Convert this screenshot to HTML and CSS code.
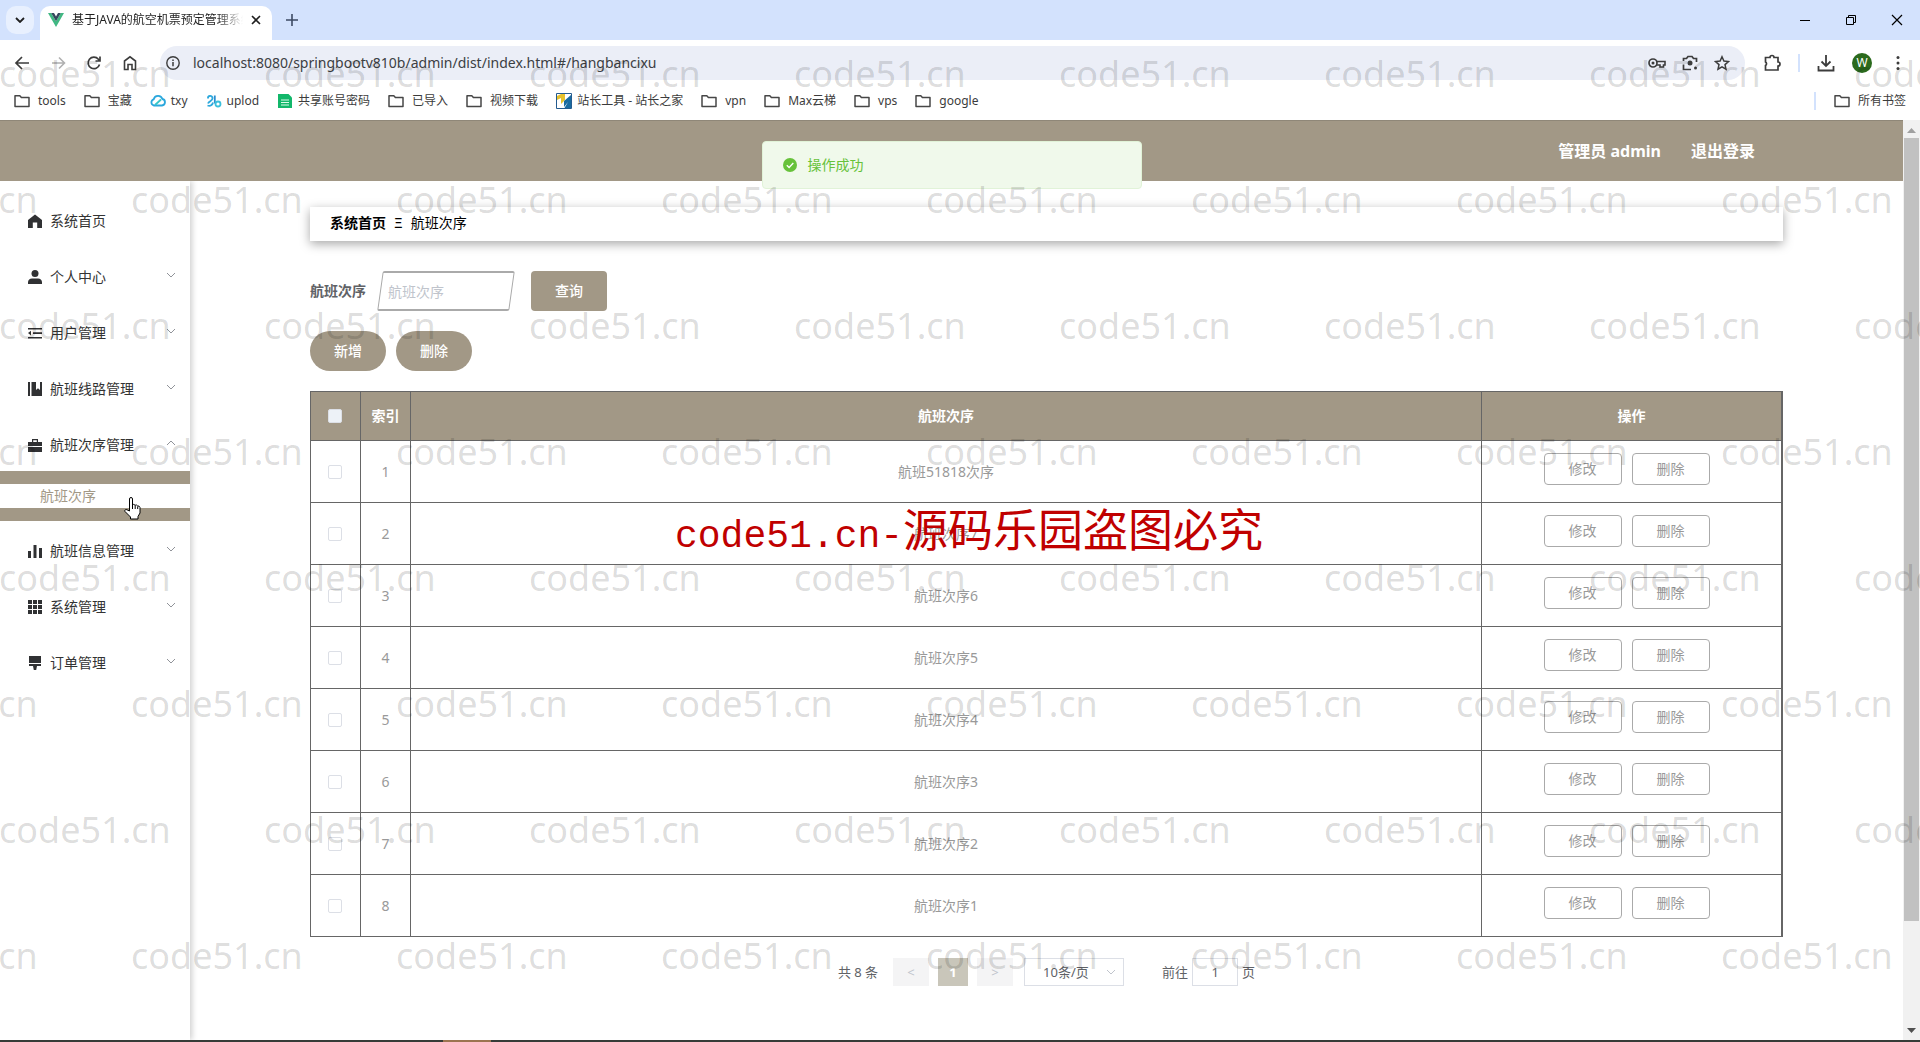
FILE: index.html
```html
<!DOCTYPE html>
<html lang="zh-CN">
<head>
<meta charset="utf-8">
<title>基于JAVA的航空机票预定管理系统</title>
<link rel="stylesheet" href="styles.css">
</head>
<body>
<svg class="defs" aria-hidden="true">
  <symbol id="folder" viewBox="0 0 16 16"><path d="M1 2.8h4.8l1.6 1.8H15v8.9H1z" fill="none" stroke="#474747" stroke-width="1.5" stroke-linejoin="round"/></symbol>
  <symbol id="down" viewBox="0 0 10 6"><path d="M1 1l4 4 4-4" fill="none" stroke="currentColor"/></symbol>
  <symbol id="up" viewBox="0 0 10 6"><path d="M1 5l4-4 4 4" fill="none" stroke="currentColor"/></symbol>
</svg>

<header class="browser">
  <div class="tabs">
    <button class="tab-search" aria-label="搜索标签页"><svg width="10" height="6" viewBox="0 0 10 6"><path d="M1 1l4 4 4-4" fill="none" stroke="#1f1f1f" stroke-width="1.8"/></svg></button>
    <div class="tab">
      <svg width="16" height="14" viewBox="0 0 16 14"><path d="M0 0h3.2L8 8.3 12.8 0H16L8 14z" fill="#41b883"/><path d="M3.2 0H6l2 3.4L10 0h2.8L8 8.3z" fill="#35495e"/></svg>
      <span class="tab-title">基于JAVA的航空机票预定管理系统</span>
      <button class="plain" aria-label="关闭标签页"><svg width="10" height="10" viewBox="0 0 10 10"><path d="M1 1l8 8M9 1l-8 8" stroke="#1f1f1f" stroke-width="1.6"/></svg></button>
    </div>
    <button class="plain new-tab" aria-label="新标签页"><svg width="12" height="12" viewBox="0 0 12 12"><path d="M6 0v12M0 6h12" stroke="#3c4a63" stroke-width="1.6"/></svg></button>
    <div class="window-buttons">
      <button class="plain" aria-label="最小化"><svg width="12" height="12" viewBox="0 0 12 12"><path d="M1 6.500h10" stroke="#000"/></svg></button>
      <button class="plain" aria-label="还原"><svg width="12" height="12" viewBox="0 0 12 12"><path d="M1.500 3.500h7v7h-7zM3.500 3.500v-2h7v7h-2" fill="none" stroke="#000"/></svg></button>
      <button class="plain" aria-label="关闭"><svg width="12" height="12" viewBox="0 0 12 12"><path d="M1 1l10 10M11 1L1 11" stroke="#000" stroke-width="1.200"/></svg></button>
    </div>
  </div>

  <div class="toolbar">
    <div class="nav">
      <button class="plain" aria-label="后退"><svg width="16" height="16" viewBox="0 0 16 16"><path d="M15 8H2M8 2L2 8l6 6" fill="none" stroke="#3c3c3c" stroke-width="1.700"/></svg></button>
      <button class="plain" aria-label="前进"><svg width="16" height="16" viewBox="0 0 16 16"><path d="M2 8h12M9 2.500L14.500 8 9 13.500" fill="none" stroke="#b0b0b0" stroke-width="1.600"/></svg></button>
      <button class="plain" aria-label="刷新"><svg width="16" height="16" viewBox="0 0 16 16"><path d="M13.500 9.500A5.800 5.800 0 1 1 12.400 4.200L14 6M14 1.500V6H9.500" fill="none" stroke="#3c3c3c" stroke-width="1.700"/></svg></button>
      <button class="plain" aria-label="主页"><svg width="16" height="16" viewBox="0 0 16 16"><path d="M2.500 14.500V6L8 1.800 13.500 6v8.500H10V9.500H6v5z" fill="none" stroke="#3c3c3c" stroke-width="1.600"/></svg></button>
    </div>
    <div class="omnibox">
      <svg class="info" width="14" height="14" viewBox="0 0 14 14"><circle cx="7" cy="7" r="6.200" fill="none" stroke="#3c3c3c" stroke-width="1.400"/><path d="M7 6v4.200M7 3.500v1.500" stroke="#3c3c3c" stroke-width="1.500"/></svg>
      <input class="url" aria-label="地址" value="localhost:8080/springbootv810b/admin/dist/index.html#/hangbancixu">
      <svg width="18" height="16" viewBox="0 0 18 16"><circle cx="5" cy="8" r="4" fill="none" stroke="#3c3c3c" stroke-width="1.700"/><circle cx="5" cy="8" r="1.500" fill="#3c3c3c"/><path d="M8.500 6.500H17v3.500h-1.500V12h-3.500v-2H8.500" fill="none" stroke="#3c3c3c" stroke-width="1.600"/></svg>
      <svg width="16" height="16" viewBox="0 0 16 16"><path d="M1.500 6V3.500h3L6 1.500h4l1.500 2h3V7M1.500 9.500v5H9" fill="none" stroke="#3c3c3c" stroke-width="1.700"/><circle cx="8" cy="8" r="2.500" fill="#3c3c3c"/><circle cx="13.500" cy="13" r="1.500" fill="#3c3c3c"/></svg>
      <svg width="16" height="16" viewBox="0 0 16 16"><path d="M8 1.800l1.900 4.300 4.600.4-3.500 3.100 1 4.600L8 11.800l-4 2.400 1-4.600L1.500 6.500l4.600-.4z" fill="none" stroke="#3c3c3c" stroke-width="1.500"/></svg>
    </div>
    <div class="actions">
      <svg width="18" height="18" viewBox="0 0 18 18"><path d="M2.500 3.500H7a2 2 0 0 1 4 0h4v4.500a2 2 0 0 1 0 4v4h-12.500v-4.500a2 2 0 0 0 0-3.500z" fill="none" stroke="#3c3c3c" stroke-width="1.700"/></svg>
      <span class="bar"></span>
      <svg width="18" height="18" viewBox="0 0 18 18"><path d="M9 1v10.500M4.500 7.500L9 12l4.500-4.500M1.500 12v4.500h15V12" fill="none" stroke="#3c3c3c" stroke-width="1.800"/></svg>
      <button class="avatar">W</button>
      <svg width="4" height="16" viewBox="0 0 4 16" fill="#3c3c3c"><circle cx="2" cy="2.500" r="1.500"/><circle cx="2" cy="8" r="1.500"/><circle cx="2" cy="13.500" r="1.500"/></svg>
    </div>
  </div>

  <nav class="bookmarks">
    <a href="#"><svg><use href="#folder"/></svg>tools</a>
    <a href="#"><svg><use href="#folder"/></svg>宝藏</a>
    <a href="#" class="site"><svg viewBox="0 0 16 16"><path d="M4 12.500a3.200 3.200 0 0 1-.3-6.200A4.500 4.500 0 0 1 12.400 6a3.300 3.300 0 0 1-.4 6.500z" fill="none" stroke="#2aa7dd" stroke-width="1.800"/><path d="M5 12l6-5.500" stroke="#35c5c9" stroke-width="1.800"/></svg>txy</a>
    <a href="#" class="site"><svg viewBox="0 0 16 16"><path d="M2 5.500a2.300 2.300 0 0 1 4.600-.5c0 3-3.600 3-4.600 5.500M1.500 12.500c3 1 5-.5 5.500-3" fill="none" stroke="#2ca8dc" stroke-width="1.800"/><path d="M8.800 2.500v8" stroke="#2b8fd0" stroke-width="1.800"/><circle cx="12" cy="11" r="2.500" fill="none" stroke="#3cc0dc" stroke-width="1.800"/></svg>uplod</a>
    <a href="#" class="site"><svg viewBox="0 0 16 16"><path d="M1 1h10.500L15 4.500V15H1z" fill="#12b76a"/><path d="M4 7h8M4 9.500h8M4 12h8" stroke="#d9fbe8"/></svg>共享账号密码</a>
    <a href="#"><svg><use href="#folder"/></svg>已导入</a>
    <a href="#"><svg><use href="#folder"/></svg>视频下载</a>
    <a href="#" class="site"><svg viewBox="0 0 16 16"><path d="M.5.5h15v15H.5z" fill="#fff" stroke="#245b8f"/><path d="M1 3l4-2h4v6l-4 4V5L1 7z" fill="#e6c12c"/><path d="M8 8l7-6v13H8.500L12 9l-4 5z" fill="#1a6ba0"/></svg>站长工具 - 站长之家</a>
    <a href="#"><svg><use href="#folder"/></svg>vpn</a>
    <a href="#"><svg><use href="#folder"/></svg>Max云梯</a>
    <a href="#"><svg><use href="#folder"/></svg>vps</a>
    <a href="#"><svg><use href="#folder"/></svg>google</a>
    <span class="bar all-bar"></span>
    <a href="#"><svg><use href="#folder"/></svg>所有书签</a>
  </nav>
</header>

<div class="viewport">
  <div class="app">
    <header class="app-header">
      <span>管理员 admin</span>
      <a href="#">退出登录</a>
      <div class="toast" role="status">
        <svg width="14" height="14" viewBox="0 0 14 14"><circle cx="7" cy="7" r="7" fill="#67c23a"/><path d="M3.800 7.200l2.300 2.200 4.200-4.400" fill="none" stroke="#fff" stroke-width="1.400"/></svg>
        操作成功
      </div>
    </header>

    <div class="app-body">
      <nav class="sidebar">
        <a href="#" class="item"><svg class="icon" viewBox="0 0 14 14"><path d="M7 .5L0 6v8h4.800V8.500h4.400V14H14V6z"/></svg><span>系统首页</span></a>
        <a href="#" class="item"><svg class="icon" viewBox="0 0 14 14"><circle cx="7" cy="3.500" r="3.500"/><path d="M0 14v-2a4 4 0 0 1 4-3.500h6a4 4 0 0 1 4 3.500v2z"/></svg><span>个人中心</span><svg class="arrow"><use href="#down"/></svg></a>
        <a href="#" class="item"><svg class="icon" viewBox="0 0 14 14"><path d="M0 2h14v1.600H0zM5 6.300h9v1.600H5zM0 11h14v1.600H0zM0 7.100l3-2.300v4.600z"/></svg><span>用户管理</span><svg class="arrow"><use href="#down"/></svg></a>
        <a href="#" class="item"><svg class="icon" viewBox="0 0 14 14"><path d="M0 0h2v14H0zM3.500 0H8v8l2-1.800L12 8V0h2v14H3.500z"/></svg><span>航班线路管理</span><svg class="arrow"><use href="#down"/></svg></a>
        <a href="#" class="item"><svg class="icon" viewBox="0 0 14 14"><path d="M0 4h4V1h6v3h4v4H0zM5.200 2.200V4h3.600V2.200zM0 9h14v5H0z" fill-rule="evenodd"/></svg><span>航班次序管理</span><svg class="arrow"><use href="#up"/></svg></a>
        <div class="submenu"><a href="#">航班次序</a></div>
        <a href="#" class="item"><svg class="icon" viewBox="0 0 14 14"><path d="M0 7h3v7H0zM5.500 1h3v13h-3zM11 4h3v10h-3z"/></svg><span>航班信息管理</span><svg class="arrow"><use href="#down"/></svg></a>
        <a href="#" class="item"><svg class="icon" viewBox="0 0 14 14"><path d="M0 0h4v4H0zM5 0h4v4H5zM10 0h4v4h-4zM0 5h4v4H0zM5 5h4v4H5zM10 5h4v4h-4zM0 10h4v4H0zM5 10h4v4H5zM10 10h4v4h-4z"/></svg><span>系统管理</span><svg class="arrow"><use href="#down"/></svg></a>
        <a href="#" class="item"><svg class="icon" viewBox="0 0 14 14"><path d="M1 0h12v7H1zM1 8h12v2H9l-.8 4H5.800L5 10H1z"/></svg><span>订单管理</span><svg class="arrow"><use href="#down"/></svg></a>
      </nav>

      <main class="content">
        <nav class="crumbs"><a href="#">系统首页</a><span>Ξ</span><span>航班次序</span></nav>

        <form class="search">
          <label for="name">航班次序</label>
          <div class="slanted"><input id="name" placeholder="航班次序"></div>
          <button type="button" class="btn">查询</button>
        </form>
        <div class="tools">
          <button class="btn round">新增</button>
          <button class="btn round">删除</button>
        </div>

        <table>
          <colgroup><col class="c-small"><col class="c-small"><col><col class="c-ops"></colgroup>
          <thead><tr><th><input type="checkbox" aria-label="全选"></th><th>索引</th><th>航班次序</th><th>操作</th></tr></thead>
          <tbody>
            <tr><td><input type="checkbox" aria-label="选择第1行"></td><td>1</td><td>航班51818次序</td><td class="ops"><button>修改</button><button>删除</button></td></tr>
            <tr><td><input type="checkbox" aria-label="选择第2行"></td><td>2</td><td>航班次序7</td><td class="ops"><button>修改</button><button>删除</button></td></tr>
            <tr><td><input type="checkbox" aria-label="选择第3行"></td><td>3</td><td>航班次序6</td><td class="ops"><button>修改</button><button>删除</button></td></tr>
            <tr><td><input type="checkbox" aria-label="选择第4行"></td><td>4</td><td>航班次序5</td><td class="ops"><button>修改</button><button>删除</button></td></tr>
            <tr><td><input type="checkbox" aria-label="选择第5行"></td><td>5</td><td>航班次序4</td><td class="ops"><button>修改</button><button>删除</button></td></tr>
            <tr><td><input type="checkbox" aria-label="选择第6行"></td><td>6</td><td>航班次序3</td><td class="ops"><button>修改</button><button>删除</button></td></tr>
            <tr><td><input type="checkbox" aria-label="选择第7行"></td><td>7</td><td>航班次序2</td><td class="ops"><button>修改</button><button>删除</button></td></tr>
            <tr><td><input type="checkbox" aria-label="选择第8行"></td><td>8</td><td>航班次序1</td><td class="ops"><button>修改</button><button>删除</button></td></tr>
          </tbody>
        </table>

        <div class="pager">
          <span class="total">共 8 条</span>
          <button disabled>&lt;</button>
          <button class="current">1</button>
          <button disabled>&gt;</button>
          <div class="size"><select aria-label="每页条数"><option>10条/页</option></select><svg class="arrow"><use href="#down"/></svg></div>
          <label class="jump">前往 <input value="1"> 页</label>
        </div>
      </main>
    </div>
  </div>

  <div class="scrollbar" aria-hidden="true">
    <svg width="9" height="5" viewBox="0 0 9 5"><path d="M0 5l4.500-5L9 5z" fill="#a0a0a0"/></svg>
    <div class="thumb"></div>
    <svg width="9" height="5" viewBox="0 0 9 5"><path d="M0 0l4.500 5L9 0z" fill="#505050"/></svg>
  </div>
</div>
<footer class="taskbar"><span></span></footer>

<svg class="pointer" width="17" height="23" viewBox="0 0 17 23" aria-hidden="true"><path d="M5.500 14V2a1.500 1.500 0 0 1 3 0v6l1-.6 1.700.8 1.300-.2 1.200 1 1.300.1 1 1.400v5.500l-2 3.500v2.500H6.500V20L1 14.500c-.8-1.500.8-2.500 2-1.700z" fill="#fff" stroke="#000"/><path d="M8.500 8v4M11.200 8.500V12M13.700 9.500V12" stroke="#000"/></svg>

<div class="watermark" aria-hidden="true">
  <div><i>code51.cn</i><i>code51.cn</i><i>code51.cn</i><i>code51.cn</i><i>code51.cn</i><i>code51.cn</i><i>code51.cn</i><i>code51.cn</i></div>
  <div><i>code51.cn</i><i>code51.cn</i><i>code51.cn</i><i>code51.cn</i><i>code51.cn</i><i>code51.cn</i><i>code51.cn</i><i>code51.cn</i></div>
  <div><i>code51.cn</i><i>code51.cn</i><i>code51.cn</i><i>code51.cn</i><i>code51.cn</i><i>code51.cn</i><i>code51.cn</i><i>code51.cn</i></div>
  <div><i>code51.cn</i><i>code51.cn</i><i>code51.cn</i><i>code51.cn</i><i>code51.cn</i><i>code51.cn</i><i>code51.cn</i><i>code51.cn</i></div>
  <div><i>code51.cn</i><i>code51.cn</i><i>code51.cn</i><i>code51.cn</i><i>code51.cn</i><i>code51.cn</i><i>code51.cn</i><i>code51.cn</i></div>
  <div><i>code51.cn</i><i>code51.cn</i><i>code51.cn</i><i>code51.cn</i><i>code51.cn</i><i>code51.cn</i><i>code51.cn</i><i>code51.cn</i></div>
  <div><i>code51.cn</i><i>code51.cn</i><i>code51.cn</i><i>code51.cn</i><i>code51.cn</i><i>code51.cn</i><i>code51.cn</i><i>code51.cn</i></div>
  <div><i>code51.cn</i><i>code51.cn</i><i>code51.cn</i><i>code51.cn</i><i>code51.cn</i><i>code51.cn</i><i>code51.cn</i><i>code51.cn</i></div>
</div>
<div class="notice"><span>code51.cn-</span>源码乐园盗图必究</div>
</body>
</html>
```
FILE: styles.css
```css
:root {
  --brand: #a29886;
  --line: #666;
}
* { box-sizing: border-box; }
body {
  margin: 0;
  min-height: 100vh;
  display: flex;
  flex-direction: column;
  background: #fff;
  font: 14px/20px "Noto Sans", "Noto Sans CJK SC", sans-serif;
  color: #333;
}
button, input, select { font: inherit; color: inherit; margin: 0; }
a { color: inherit; text-decoration: none; }
svg { flex: none; display: block; }
.defs { position: absolute; width: 0; height: 0; }
.plain { border: 0; background: none; padding: 0; display: grid; place-items: center; }

/* Browser chrome */
.tabs { height: 40px; background: #d3e2fd; display: flex; align-items: center; padding: 0 17px 0 6px; }
.tab-search { width: 28px; height: 28px; border: 0; border-radius: 10px; background: #e8f0fe; display: grid; place-items: center; padding: 0; }
.tab { align-self: flex-end; width: 232px; height: 34px; margin-left: 6px; padding: 0 11px 6px 8px; background: #fff; border-radius: 10px 10px 0 0; display: flex; align-items: center; gap: 8px; }
.tab-title { flex: 1; font-size: 12px; color: #1f1f1f; white-space: nowrap; overflow: hidden; mask-image: linear-gradient(90deg, #000 85%, transparent); }
.new-tab { margin-left: 14px; }
.window-buttons { margin-left: auto; display: flex; gap: 34px; }
.toolbar { height: 40px; display: flex; align-items: center; padding: 6px 20px 0 14px; }
.nav { display: flex; gap: 20px; }
.omnibox { flex: 1; height: 34px; margin-left: 22px; padding: 0 15px 0 6px; border-radius: 17px; background: #ebeef7; display: flex; align-items: center; gap: 16px; }
.info { margin-right: -3px; }
.url { flex: 1; min-width: 0; border: 0; padding: 0; background: none; color: #3c4043; }
.actions { display: flex; align-items: center; gap: 17px; margin-left: 18px; }
.bar { width: 2px; height: 18px; background: #d3e2fd; }
.avatar { width: 20px; height: 20px; margin-right: 7px; border: 0; border-radius: 50%; padding: 0; background: #2b6a1d; color: #fff; font-size: 12px; }
.bookmarks { height: 40px; display: flex; align-items: center; gap: 18px; padding: 1px 14px 0; font-size: 12px; color: #3c3c3c; white-space: nowrap; }
.bookmarks a { display: flex; align-items: center; gap: 8px; }
.bookmarks .site { gap: 5px; }
.bookmarks svg { width: 16px; height: 16px; }
.all-bar { margin-left: auto; }

/* Page */
.viewport { flex: 1; display: flex; }
.app { flex: 1; min-width: 0; display: flex; flex-direction: column; }
.app-header { position: relative; height: 61px; background: var(--brand); border-top: 1px solid #8f8778; display: flex; align-items: center; justify-content: flex-end; gap: 30px; padding-right: 148px; color: #fff; font-size: 16px; font-weight: 700; }
.toast { position: absolute; z-index: 1; top: 20px; left: 50%; margin-left: -190px; width: 380px; height: 48px; padding: 0 20px; border: 1px solid #e1f3d8; border-radius: 4px; background: #f0f9eb; color: #67c23a; font-size: 14px; font-weight: 400; display: flex; align-items: center; gap: 11px; }
.app-body { flex: 1; display: flex; }

.sidebar { width: 190px; padding-top: 10px; box-shadow: 2px 0 6px rgba(0, 0, 0, .2); clip-path: inset(0 -12px 0 0); }
.item { height: 56px; padding: 0 14px 0 28px; display: flex; align-items: center; }
.item span { flex: 1; padding: 4px 0 0 8px; }
.icon { width: 14px; height: 14px; margin-top: 4px; fill: #303133; }
.arrow { width: 10px; height: 6px; color: #909399; }
.submenu { padding: 13px 0; background: var(--brand); }
.submenu a { display: block; padding-left: 40px; line-height: 24px; background: #fff; color: var(--brand); }

.content { flex: 1; min-width: 0; padding: 26px 120px 54px; }
.crumbs { height: 34px; padding: 0 20px 2px; display: flex; align-items: center; gap: 8px; color: #000; box-shadow: 0 3px 10px rgba(0, 0, 0, .35); }
.crumbs a { font-weight: 700; }
.search { display: flex; align-items: center; margin-top: 30px; }
.search label { color: #606266; font-weight: 700; margin-right: 14px; }
.slanted { position: relative; width: 132px; height: 40px; margin-right: 19px; }
.slanted::before { content: ""; position: absolute; inset: 0; border: 1px solid #aaa; border-width: 2px 1px; border-radius: 2px; transform: skewX(-8deg); }
.slanted input { position: relative; width: 100%; height: 100%; border: 0; padding: 0 8px; background: none; }
.slanted input::placeholder { color: #c0c4cc; }
.btn { width: 76px; height: 40px; border: 0; border-radius: 4px; padding: 0; background: var(--brand); color: #fff; font-weight: 500; }
.tools { display: flex; gap: 10px; margin: 20px 0; }
.round { border-radius: 20px; }

table { width: 100%; table-layout: fixed; border-collapse: separate; border-spacing: 0; border: 1px solid var(--line); border-bottom: 0; color: #999; text-align: center; }
.c-small { width: 50px; }
.c-ops { width: 300px; }
th, td { padding: 0; border-right: 1px solid var(--line); border-bottom: 1px solid var(--line); }
th { height: 49px; background: var(--brand); color: #fff; font-weight: 700; }
td { height: 62px; }
input[type="checkbox"] { appearance: none; display: block; width: 14px; height: 14px; margin: 0 auto 0 17px; border: 1px solid #dcdfe6; border-radius: 2px; background: #fff; }
th input[type="checkbox"] { background: #edf2f7; }
.ops { padding-bottom: 6px; }
.ops button { width: 78px; height: 32px; margin-right: 10px; padding: 0; border: 1px solid #aaa; border-radius: 4px; background: #fff; }

.pager { display: flex; justify-content: center; align-items: center; margin-top: 21px; font-size: 13px; color: #606266; white-space: nowrap; }
.pager button { width: 36px; height: 28px; margin-right: 9px; border: 0; padding: 0; background: #f4f4f5; color: #c0c4cc; }
.total { margin-right: 15px; }
.pager .current { width: 30px; background: #c9c6ba; color: #fff; font-weight: 700; }
.size { position: relative; width: 100px; height: 28px; margin: 0 38px 0 2px; }
.size select { appearance: none; width: 100%; height: 100%; border: 1px solid #dcdfe6; background: #fff; padding: 0 18px; }
.size .arrow { position: absolute; right: 8px; top: 11px; color: #c0c4cc; }
.jump { display: flex; align-items: center; gap: 4px; }
.jump input { width: 46px; height: 28px; border: 1px solid #dcdfe6; padding: 0; text-align: center; background: #fff; }

.scrollbar { width: 17px; background: #f1f1f1; display: flex; flex-direction: column; align-items: center; justify-content: space-between; padding: 8px 0 7px; }
.thumb { width: 15px; flex: 0 0 783px; margin: 5px 0 auto; background: #c1c1c1; }
.taskbar { height: 2px; background: #363c38; }
.taskbar span { display: block; width: 48px; height: 2px; margin-left: 443px; background: #9c7450; }

/* Layers above the page */
.pointer { position: absolute; left: 124px; top: 497px; z-index: 2; }
.watermark { position: absolute; inset: 0; overflow: hidden; padding-top: 11px; z-index: 3; pointer-events: none; font-size: 36px; line-height: 126px; color: rgba(0, 0, 0, .14); }
.watermark div { display: flex; margin-left: -1px; }
.watermark div:nth-child(even) { margin-left: -134px; }
.watermark i { flex: 0 0 265px; font-style: normal; }
.notice { position: absolute; z-index: 4; top: 498px; left: 675px; display: flex; align-items: baseline; white-space: nowrap; font: 400 45px/60px "Noto Sans CJK SC", sans-serif; color: #c00000; pointer-events: none; }
.notice span { font: 400 38px/60px "Liberation Mono", monospace; }
```
